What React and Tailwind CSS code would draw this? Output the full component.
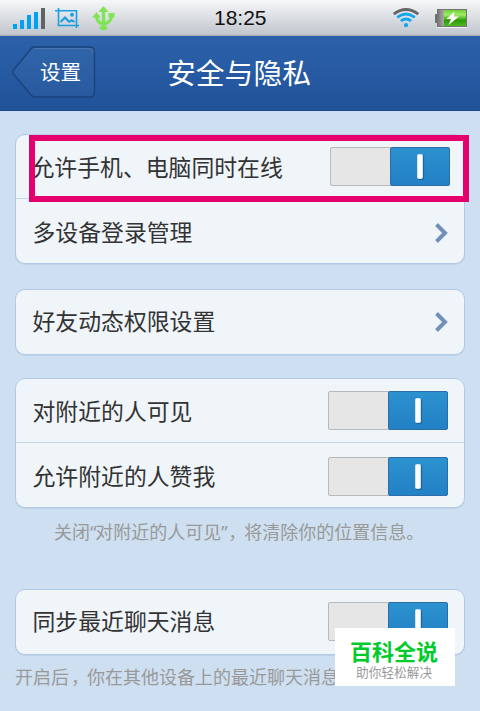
import React, { useState } from 'react';

const StatusBar = () => (
  <header className="flex h-9 items-center border-b border-[#a9adb3] bg-linear-to-b from-[#f6f7f9] to-[#c1c6cd]">
    <svg className="ml-[13px] h-9 w-8" viewBox="0 0 32 36" shapeRendering="crispEdges">
      <path fill="#00a2f2" d="M0 24h4v5H0zM7 20h4v9H7zM14 15h4v14h-4zM21 12h4v17h-4z" />
      <path fill="#626365" d="M28 8h4v21h-4z" />
    </svg>
    <svg className="ml-2.5 h-9 w-6" viewBox="55 0 24 36" fill="none" stroke="#1a9fe3" strokeWidth="1.6">
      <path d="M55 10.7h22.200M58.500 8v18.200M57.500 25.500H79M76.500 10v18" />
      <path strokeWidth="2.100" d="M60.500 22l4.500-4.500 4 4.200 2.500-1.200 3 1.200" />
      <circle cx="72" cy="14.800" r="2" fill="#1a9fe3" stroke="none" />
    </svg>
    <svg className="ml-[13px] h-9 w-6" viewBox="92 0 24 36" fill="#80e554">
      <path d="M103.500 6l5.200 6h-10.400zM92 17.500l4.500-5.200 4.300 5.200zM108.500 13h6v4.500h-6z" />
      <ellipse cx="103.500" cy="27.800" rx="3.800" ry="2.400" />
      <path d="M103.500 11v16M96.500 16.500c.5 4.500 3 7 7 7s7.500-2.500 8-7" fill="none" stroke="#80e554" strokeWidth="3.300" />
    </svg>
    <time className="ml-[98px] w-[54px] font-['Liberation_Sans',sans-serif] text-[21px] leading-9 text-[#111]">18:25</time>
    <svg className="ml-[124px] h-9 w-7" viewBox="392 0 28 36" fill="none" strokeWidth="2.8">
      <path stroke="#666" d="M393.700 14.200q12.300-9.400 24.600 0" />
      <path stroke="#12a6ee" d="M397.200 17.300q8.800-6.600 17.600 0M400.800 21q5.200-4 10.400 0" />
      <circle cx="406" cy="25.200" r="2.100" fill="#12a6ee" />
    </svg>
    <svg className="ml-[15px] h-9 w-[33px]" viewBox="435 0 33 36">
      <defs>
        <linearGradient id="charge" x2="0" y2="1">
          <stop offset="0" stopColor="#6ed038" />
          <stop offset=".3" stopColor="#a0ec68" />
          <stop offset=".65" stopColor="#2c9b05" />
          <stop offset="1" stopColor="#4fb925" />
        </linearGradient>
        <linearGradient id="empty" x2="1">
          <stop offset="0" stopColor="#666" />
          <stop offset="1" stopColor="#aaa" />
        </linearGradient>
      </defs>
      <path d="M437 9h30v18h-30v-4h-2v-9h2z" fill="#747474" />
      <path d="M438 10h6v16h-6v-4h-2v-7h2z" fill="url(#empty)" />
      <path d="M444 10h22v16h-22z" fill="url(#charge)" />
      <path d="M454.500 11.500l-8 7.500h4.500l-2.500 6 10.500-8.500h-5z" fill="#fff" />
      <path d="M437 27.500h30" stroke="#f0f2f4" />
    </svg>
  </header>
);

const NavBar = () => (
  <nav className="flex h-[75px] border-b border-[#1e4b87] bg-linear-to-b from-[#2c62aa] to-[#21529a] text-white">
    <button className="relative ml-3 mt-2.5 h-[52px] w-[84px] pl-7 text-left text-[20.5px] leading-[48px]">
      <svg className="absolute inset-0 h-full w-full" viewBox="0 0 84 52" fill="none">
        <path d="M22 1h56q4.500 0 4.500 5v40q0 5-4.500 5H23q-2 0-4-2L1.500 28q-1.500-2 0-4L18 4q2-3 4-3z" fill="#fff" fillOpacity=".03" stroke="#1a4379" strokeWidth="1.400" />
        <path d="M22 2.500h55q4 0 4 4" stroke="#4974ad" strokeWidth="1" />
      </svg>
      <span className="relative">设置</span>
    </button>
    <h1 className="ml-[71px] text-[28.8px] leading-[73px]">安全与隐私</h1>
  </nav>
);

const Toggle = ({ on, onChange, className = '' }) => (
  <button
    role="switch"
    aria-checked={on}
    onClick={onChange}
    className={`flex h-[39px] w-[120px] shrink-0 rounded-xs border border-[#b8b9bb] bg-[#e6e6e6] ${on ? 'justify-end' : 'justify-start'} ${className}`}
  >
    <span className="-m-px flex h-[39px] w-[60px] items-center justify-center rounded-xs border border-[#2c6ca8] bg-linear-to-b from-[#2c92cf] to-[#2380c5]">
      <span className="h-[25px] w-[6px] rounded-[1.5px] border border-[#cfe3f2] bg-white shadow-[1px_1px_1px_#1b639b]" />
    </span>
  </button>
);

const Chevron = ({ className = '' }) => (
  <svg className={`-mr-px h-5 w-[14px] ${className}`} viewBox="0 0 14 20" fill="none" stroke="#7391b8" strokeWidth="4">
    <path d="M1.500 1.500L10 10l-8.500 8.500" />
  </svg>
);

const Card = ({ children, className = '' }) => (
  <section className={`mx-[15px] divide-y divide-[#c3d5e7] rounded-[10px] border-[1.500px] border-[#b1cae6] bg-[#f0f5fa] shadow-[0_1px_0_#bdd2e9] ${className}`}>
    {children}
  </section>
);

const Row = ({ label, labelClass = '', children }) => (
  <div className="flex h-16 items-center justify-between pl-[16.5px] pr-4 text-[22.85px] text-[#333]">
    <span className={`whitespace-nowrap ${labelClass}`}>{label}</span>
    {children}
  </div>
);

// full-width comma that sits in the middle of its cell
const Comma = () => <span className="inline-block w-[18px] indent-[2px]">，</span>;

const App = () => {
  const [settings, setSettings] = useState({
    online: true,
    visible: true,
    likes: true,
    sync: true,
  });

  const toggle = (key) => setSettings((prev) => ({ ...prev, [key]: !prev[key] }));

  return (
    <div className="relative h-[711px] w-[480px] overflow-hidden bg-[#cddff0] font-['Noto_Sans','Noto_Sans_CJK_SC',sans-serif]" lang="zh-CN">
      <StatusBar />
      <NavBar />

      <main>
        <Card className="mt-[23px] h-[130px]">
          <Row label="允许手机、电脑同时在线" labelClass="-ml-px pt-[3px]">
            <Toggle on={settings.online} onChange={() => toggle('online')} className="-mr-0.5" />
          </Row>
          <Row label="多设备登录管理" labelClass="pt-[5px]">
            <Chevron className="mt-[3px]" />
          </Row>
        </Card>

        <Card className="mt-[25px] h-[66px]">
          <Row label="好友动态权限设置">
            <Chevron />
          </Row>
        </Card>

        <Card className="mt-[23px] h-[130px]">
          <Row label="对附近的人可见" labelClass="pt-[3px]">
            <Toggle on={settings.visible} onChange={() => toggle('visible')} />
          </Row>
          <Row label="允许附近的人赞我" labelClass="pt-[5px]">
            <Toggle on={settings.likes} onChange={() => toggle('likes')} className="mt-0.5" />
          </Row>
        </Card>
        <p className="mt-2.5 h-7 whitespace-nowrap pl-[54px] text-[18px] leading-7 text-[#999]">
          关闭<span className="tracking-[-1.3px]">“</span>对附近的人可见<span className="tracking-[-1.3px]">”</span><Comma />将清除你的位置信息。
        </p>

        <Card className="mt-[43px] h-[66px]">
          <Row label="同步最近聊天消息">
            <Toggle on={settings.sync} onChange={() => toggle('sync')} className="-mt-0.5" />
          </Row>
        </Card>
        <p className="mt-2 h-7 whitespace-nowrap pl-[15px] text-[18px] leading-7 text-[#999]">
          开启后<Comma />你在其他设备上的最近聊天消息
        </p>
      </main>

      {/* Highlight frame over the first row */}
      <div className="pointer-events-none absolute left-[29px] top-[135px] h-[67px] w-[440px] border-6 border-[#e6006e]" />

      {/* Corner badge */}
      <div className="absolute left-[335px] top-[628px] h-[58px] w-[120px] bg-white pt-[11px]">
        <div className="pl-[15px] text-[22px] font-bold leading-6 text-[#00cb2c]">百科全说</div>
        <div className="pl-[21px] text-[12.7px] leading-[18px] text-[#999]">助你轻松解决</div>
      </div>
    </div>
  );
};

export default App;
